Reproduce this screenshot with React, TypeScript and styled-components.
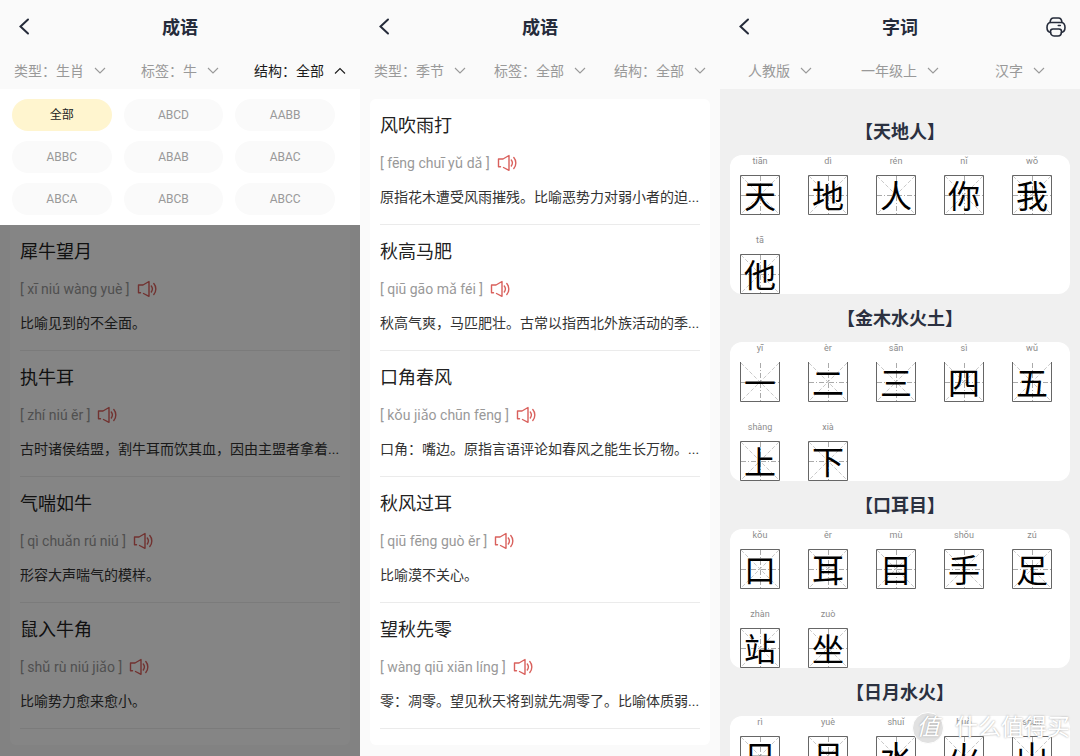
import React from 'react';
import styled, { createGlobalStyle } from 'styled-components';

const sans = `Roboto, "Noto Sans CJK SC", sans-serif`;

const GlobalStyle = createGlobalStyle`
  * { box-sizing: border-box; }
  body { margin: 0; font-family: ${sans}; background: #fafafa; }
  button { font: inherit; border: 0; padding: 0; background: none; cursor: pointer; }
  h1, h2, p, ul { margin: 0; padding: 0; }
  ul { list-style: none; }
`;

const Board = styled.main`
  position: relative;
  display: grid;
  grid-template-columns: repeat(3, minmax(0, 1fr));
  height: 100vh;
  overflow: hidden;
`;

const Screen = styled.section<{ $gray?: boolean }>`
  display: flex;
  flex-direction: column;
  min-height: 0;
  overflow: hidden;
  background: ${(p) => (p.$gray ? '#f0f0f0' : '#fafafa')};
`;

const TopBar = styled.header`
  flex: none;
  display: grid;
  grid-template-columns: 40px 1fr 40px;
  align-items: center;
  height: 54px;
  padding: 0 4px;
  background: #fafafa;
  color: #252b3a;
`;

const IconButton = styled.button`
  display: flex;
  justify-content: center;
  align-items: center;
  height: 40px;
  color: #252b3a;
`;

const ScreenTitle = styled.h1`
  padding-top: 2px;
  text-align: center;
  font-size: 18px;
  line-height: 26px;
  font-weight: 700;
`;

const FilterBar = styled.nav`
  flex: none;
  display: grid;
  grid-template-columns: repeat(3, 1fr);
  height: 35px;
  padding-bottom: 2px;
  background: #fafafa;
`;

const FilterButton = styled.button<{ $open?: boolean }>`
  display: flex;
  justify-content: center;
  align-items: center;
  gap: 10px;
  font-size: 14px;
  line-height: 20px;
  white-space: nowrap;
  color: ${(p) => (p.$open ? '#1c1c1c' : '#999')};
`;

const Menu = styled.div`
  flex: none;
  display: grid;
  grid-template-columns: repeat(3, 1fr);
  gap: 10px 12px;
  padding: 10px 25px 10px 12px;
  background: #fff;
`;

const Pill = styled.button<{ $active?: boolean }>`
  height: 32px;
  border-radius: 16px;
  font-size: 12px;
  line-height: 32px;
  background: ${(p) => (p.$active ? '#fff5cf' : '#fafafa')};
  color: ${(p) => (p.$active ? '#222' : '#999')};
`;

const ListArea = styled.div<{ $continued?: boolean }>`
  position: relative;
  flex: 1;
  padding: ${(p) => (p.$continued ? '0' : '10px')} 10px 0;
`;

const Scrim = styled.div`
  position: absolute;
  inset: 0;
  background: rgba(0, 0, 0, 0.48);
`;

const Card = styled.ul<{ $continued?: boolean }>`
  padding: 0 10px 16px;
  border-radius: ${(p) => (p.$continued ? '0 0 6px 6px' : '6px')};
  background: #fff;
`;

const Idiom = styled.li`
  display: flex;
  flex-direction: column;
  padding: 14px 0 15px;
  border-bottom: 1px solid #ebebeb;
`;

const IdiomName = styled.h2`
  font-size: 18px;
  line-height: 26px;
  font-weight: 400;
  color: #222;
`;

const Reading = styled.div`
  display: flex;
  align-items: center;
  gap: 7px;
  height: 20px;
  margin: 14px 0 13px;
  font-size: 14px;
  line-height: 20px;
  color: #999;
`;

const SoundButton = styled.button`
  display: flex;
  color: #d9605c;
`;

const Meaning = styled.p`
  font-size: 14px;
  line-height: 23px;
  color: #333;
  white-space: nowrap;
`;

const Lessons = styled.div`
  flex: 1;
  min-height: 0;
  overflow: hidden;
  padding: 18px 10px 0;
`;

const LessonTitle = styled.h2`
  padding-top: 2px;
  text-align: center;
  font-size: 18px;
  line-height: 46px;
  font-weight: 700;
  color: #2b3140;
`;

const CharGrid = styled.ul`
  display: grid;
  grid-template-columns: repeat(5, 1fr);
  row-gap: 19px;
  border-radius: 12px;
  background: #fff;
`;

const CharCell = styled.li`
  display: flex;
  flex-direction: column;
  align-items: center;
  gap: 7px;
  padding-right: 8px;
`;

const CharPinyin = styled.span`
  font-size: 9px;
  line-height: 13px;
  color: #8c8c8c;
`;

const CharBox = styled.div`
  display: grid;
  width: 40px;
  height: 40px;

  > * { grid-area: 1 / 1; }
`;

const Glyph = styled.span`
  text-align: center;
  font-family: KaiTi, STKaiti, "Noto Sans CJK SC", serif;
  font-size: 32px;
  line-height: 38px;
  color: #000;
`;

const Watermark = styled.div`
  position: absolute;
  right: 10px;
  bottom: 12px;
  display: flex;
  align-items: center;
  gap: 11px;
  font-size: 23px;
  line-height: 30px;
  color: #fff;
  text-shadow: 0 0 2px #999;
  white-space: nowrap;
`;

const WatermarkSeal = styled.span`
  width: 32px;
  height: 32px;
  border: 1px solid #fff;
  border-radius: 50%;
  background: rgba(222, 222, 222, 0.9);
  text-align: center;
  font-style: italic;
`;

const BackIcon = () => (
  <svg width="12" height="18" viewBox="0 0 12 18" fill="none" stroke="currentColor" strokeWidth="2" strokeLinecap="round">
    <path d="M10 1.500 2.500 8.500 10 15.500" />
  </svg>
);

const PrinterIcon = () => (
  <svg width="20" height="20" viewBox="0 0 20 20" fill="none" stroke="currentColor" strokeWidth="1.600" strokeLinecap="round" strokeLinejoin="round">
    <path d="M4 5.500 C4.300 2.500 5.500 1 7.500 1 H12.500 C14.500 1 15.700 2.500 16 5.500" />
    <path d="M4.500 15.500 C2.200 15 1 13.500 1 10.500 C1 7.500 2.300 5.700 4.500 5.500 H15.500 C17.700 5.700 19 7.500 19 10.500 C19 13.500 17.800 15 15.500 15.500" />
    <path d="M7 12 H13 C14.700 12 15.500 12.800 15.500 14.300 C15.500 17.500 14 19 12 19 H8 C6 19 4.500 17.500 4.500 14.300 C4.500 12.800 5.300 12 7 12 Z M12.300 8.500 H14.300" />
  </svg>
);

const Chevron = ({ up }: { up?: boolean }) => (
  <svg width="12" height="8" viewBox="0 0 12 8" fill="none" stroke="currentColor" strokeWidth="1.1">
    <path d={up ? 'M1 6.500 6 1.500 11 6.500' : 'M1 1 6 6 11 1'} />
  </svg>
);

const SoundIcon = () => (
  <svg width="20" height="18" viewBox="0 0 20 18" fill="none" stroke="currentColor" strokeWidth="1.4" strokeLinecap="round" strokeLinejoin="round">
    <path d="M3.500 12.700 H1.500 V5 H6 L12 1.500 V16.300 L6.500 13.500" />
    <path d="M14.300 6 C15.500 7.500 15.500 10.300 14.300 12 M16.800 3.500 C19.500 6.500 19.500 11.500 16.800 14.500" />
  </svg>
);

const Guides = ({ openTop }: { openTop?: boolean }) => (
  <svg width="40" height="40" viewBox="0 0 40 40" fill="none">
    <path d={openTop ? 'M.5 0V39.500H39.500V0' : 'M.5 .5H39.500V39.500H.5Z'} stroke="#666" strokeWidth="1" />
    <path d="M20.500 1V39M1 20.500H39" stroke="#aaa" strokeWidth="1" strokeDasharray="5 2 1 2" />
    <path d="M1 1 39 39M39 1 1 39" stroke="#bbb" strokeWidth="0.8" strokeDasharray="4 2" />
  </svg>
);

type Filter = { label: string; open?: boolean };
type Entry = { name: string; pinyin: string; meaning: string };
type Lesson = { title: string; chars: [string, string][]; openTop?: boolean };

const structures = ['全部', 'ABCD', 'AABB', 'ABBC', 'ABAB', 'ABAC', 'ABCA', 'ABCB', 'ABCC'];

const oxIdioms: Entry[] = [
  { name: '犀牛望月', pinyin: 'xī niú wàng yuè', meaning: '比喻见到的不全面。' },
  { name: '执牛耳', pinyin: 'zhí niú ěr', meaning: '古时诸侯结盟，割牛耳而饮其血，因由主盟者拿着...' },
  { name: '气喘如牛', pinyin: 'qì chuǎn rú niú', meaning: '形容大声喘气的模样。' },
  { name: '鼠入牛角', pinyin: 'shǔ rù niú jiǎo', meaning: '比喻势力愈来愈小。' },
];

const seasonIdioms: Entry[] = [
  { name: '风吹雨打', pinyin: 'fēng chuī yǔ dǎ', meaning: '原指花木遭受风雨摧残。比喻恶势力对弱小者的迫...' },
  { name: '秋高马肥', pinyin: 'qiū gāo mǎ féi', meaning: '秋高气爽，马匹肥壮。古常以指西北外族活动的季...' },
  { name: '口角春风', pinyin: 'kǒu jiǎo chūn fēng', meaning: '口角：嘴边。原指言语评论如春风之能生长万物。...' },
  { name: '秋风过耳', pinyin: 'qiū fēng guò ěr', meaning: '比喻漠不关心。' },
  { name: '望秋先零', pinyin: 'wàng qiū xiān líng', meaning: '零：凋零。望见秋天将到就先凋零了。比喻体质弱...' },
];

const lessons: Lesson[] = [
  { title: '天地人', chars: [['tiān', '天'], ['dì', '地'], ['rén', '人'], ['nǐ', '你'], ['wǒ', '我'], ['tā', '他']] },
  { title: '金木水火土', openTop: true, chars: [['yī', '一'], ['èr', '二'], ['sān', '三'], ['sì', '四'], ['wǔ', '五'], ['shàng', '上'], ['xià', '下']] },
  { title: '口耳目', chars: [['kǒu', '口'], ['ěr', '耳'], ['mù', '目'], ['shǒu', '手'], ['zú', '足'], ['zhàn', '站'], ['zuò', '坐']] },
  { title: '日月水火', chars: [['rì', '日'], ['yuè', '月'], ['shuǐ', '水'], ['huǒ', '火'], ['shān', '山']] },
];

const Header = ({ title, filters, printable }: { title: string; filters: Filter[]; printable?: boolean }) => (
  <>
    <TopBar>
      <IconButton aria-label="返回"><BackIcon /></IconButton>
      <ScreenTitle>{title}</ScreenTitle>
      {printable && <IconButton aria-label="打印"><PrinterIcon /></IconButton>}
    </TopBar>
    <FilterBar>
      {filters.map((f) => (
        <FilterButton key={f.label} $open={f.open} aria-expanded={!!f.open}>
          {f.label}
          <Chevron up={f.open} />
        </FilterButton>
      ))}
    </FilterBar>
  </>
);

const IdiomList = ({ entries, continued }: { entries: Entry[]; continued?: boolean }) => (
  <Card $continued={continued}>
    {entries.map((e) => (
      <Idiom key={e.name}>
        <IdiomName>{e.name}</IdiomName>
        <Reading>
          <span>[ {e.pinyin} ]</span>
          <SoundButton aria-label="播放读音"><SoundIcon /></SoundButton>
        </Reading>
        <Meaning>{e.meaning}</Meaning>
      </Idiom>
    ))}
  </Card>
);

export default function App() {
  return (
    <>
      <GlobalStyle />
      <Board>
        <Screen>
          <Header title="成语" filters={[{ label: '类型：生肖' }, { label: '标签：牛' }, { label: '结构：全部', open: true }]} />
          <Menu>
            {structures.map((s, i) => (
              <Pill key={s} $active={i === 0}>{s}</Pill>
            ))}
          </Menu>
          <ListArea $continued>
            <IdiomList entries={oxIdioms} continued />
            <Scrim />
          </ListArea>
        </Screen>

        <Screen>
          <Header title="成语" filters={[{ label: '类型：季节' }, { label: '标签：全部' }, { label: '结构：全部' }]} />
          <ListArea>
            <IdiomList entries={seasonIdioms} />
          </ListArea>
        </Screen>

        <Screen $gray>
          <Header title="字词" printable filters={[{ label: '人教版' }, { label: '一年级上' }, { label: '汉字' }]} />
          <Lessons>
            {lessons.map((l) => (
              <section key={l.title}>
                <LessonTitle>【{l.title}】</LessonTitle>
                <CharGrid>
                  {l.chars.map(([pinyin, char], i) => (
                    <CharCell key={char}>
                      <CharPinyin>{pinyin}</CharPinyin>
                      <CharBox>
                        <Guides openTop={l.openTop && i < 5} />
                        <Glyph>{char}</Glyph>
                      </CharBox>
                    </CharCell>
                  ))}
                </CharGrid>
              </section>
            ))}
          </Lessons>
        </Screen>

        <Watermark>
          <WatermarkSeal>值</WatermarkSeal>
          <span>什么值得买</span>
        </Watermark>
      </Board>
    </>
  );
}
